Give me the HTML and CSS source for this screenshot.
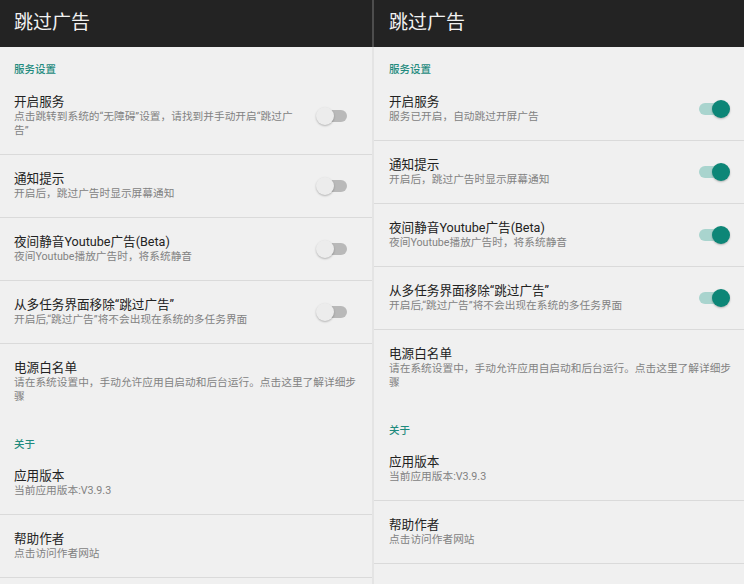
FILE: index.html
```html
<!DOCTYPE html>
<html lang="zh-CN">
<head>
<meta charset="utf-8">
<title>跳过广告</title>
<link rel="stylesheet" href="styles.css">
</head>
<body>
<div class="screens">
  <section class="phone phone-off">
    <header class="appbar"><h1>跳过广告</h1></header>
    <div class="cat">服务设置</div>
    <div class="pref">
      <div class="txt"><div class="t">开启服务</div><div class="s">点击跳转到系统的“无障碍”设置，请找到并手动开启“跳过广告”</div></div>
      <span class="sw"></span>
    </div>
    <div class="pref">
      <div class="txt"><div class="t">通知提示</div><div class="s">开启后，跳过广告时显示屏幕通知</div></div>
      <span class="sw"></span>
    </div>
    <div class="pref">
      <div class="txt"><div class="t">夜间静音Youtube广告(Beta)</div><div class="s">夜间Youtube播放广告时，将系统静音</div></div>
      <span class="sw"></span>
    </div>
    <div class="pref">
      <div class="txt"><div class="t">从多任务界面移除“跳过广告”</div><div class="s">开启后,“跳过广告”将不会出现在系统的多任务界面</div></div>
      <span class="sw"></span>
    </div>
    <div class="pref plain last">
      <div class="txt"><div class="t">电源白名单</div><div class="s">请在系统设置中，手动允许应用自启动和后台运行。点击这里了解详细步骤</div></div>
    </div>
    <div class="cat cat2">关于</div>
    <div class="pref plain">
      <div class="txt"><div class="t">应用版本</div><div class="s">当前应用版本:V3.9.3</div></div>
    </div>
    <div class="pref plain">
      <div class="txt"><div class="t">帮助作者</div><div class="s">点击访问作者网站</div></div>
    </div>
  </section>
  <div class="split"></div>
  <section class="phone phone-on">
    <header class="appbar"><h1>跳过广告</h1></header>
    <div class="cat">服务设置</div>
    <div class="pref">
      <div class="txt"><div class="t">开启服务</div><div class="s">服务已开启，自动跳过开屏广告</div></div>
      <span class="sw on"></span>
    </div>
    <div class="pref">
      <div class="txt"><div class="t">通知提示</div><div class="s">开启后，跳过广告时显示屏幕通知</div></div>
      <span class="sw on"></span>
    </div>
    <div class="pref">
      <div class="txt"><div class="t">夜间静音Youtube广告(Beta)</div><div class="s">夜间Youtube播放广告时，将系统静音</div></div>
      <span class="sw on"></span>
    </div>
    <div class="pref">
      <div class="txt"><div class="t">从多任务界面移除“跳过广告”</div><div class="s">开启后,“跳过广告”将不会出现在系统的多任务界面</div></div>
      <span class="sw on"></span>
    </div>
    <div class="pref plain last">
      <div class="txt"><div class="t">电源白名单</div><div class="s">请在系统设置中，手动允许应用自启动和后台运行。点击这里了解详细步骤</div></div>
    </div>
    <div class="cat cat2">关于</div>
    <div class="pref plain">
      <div class="txt"><div class="t">应用版本</div><div class="s">当前应用版本:V3.9.3</div></div>
    </div>
    <div class="pref plain">
      <div class="txt"><div class="t">帮助作者</div><div class="s">点击访问作者网站</div></div>
    </div>
  </section>
</div>
</body>
</html>
```
FILE: styles.css
```css
html, body {
  margin: 0;
  padding: 0;
  background: #f0f0f0;
}
body {
  font-family: Roboto, "Noto Sans CJK SC", sans-serif;
  width: 744px;
  height: 584px;
  overflow: hidden;
}
.screens {
  display: flex;
  height: 584px;
}
.phone {
  background: #f0f0f0;
  overflow: hidden;
}
.phone-off { width: 372px; }
.phone-on { width: 370px; }
.split {
  width: 2px;
  background: linear-gradient(#4d4d4d 0, #4d4d4d 47px, #e4e4e4 47px);
}
.appbar {
  height: 47px;
  background: #232323;
  display: flex;
  align-items: center;
  padding: 0 0 1px 14px;
  box-sizing: border-box;
}
.phone-on .appbar { padding-left: 15px; }
.appbar h1 {
  margin: 0;
  font-size: 19px;
  font-weight: 400;
  color: #f2f2f2;
  line-height: 24px;
}
.cat {
  padding: 16px 14px 1px;
  font-size: 10.5px;
  line-height: 14px;
  color: #1f8b7e;
  font-weight: 500;
}
.phone-on .cat { padding-left: 15px; }
.cat.cat2 { padding-top: 18px; padding-bottom: 0; }
.pref {
  display: flex;
  align-items: center;
  padding: 16px 25px 16px 14px;
  border-bottom: 1px solid #dadada;
}
.phone-on .pref { padding: 16px 14px 16px 15px; }
.pref.plain { padding-right: 8px; }
.phone-on .pref.plain { padding-right: 8px; }
.pref.last { border-bottom: 0; }
.txt {
  flex: 1;
  min-width: 0;
}
.t {
  font-size: 12.6px;
  line-height: 16px;
  color: #222;
}
.s {
  font-size: 10.7px;
  line-height: 14px;
  color: #828282;
}
.sw {
  position: relative;
  flex: none;
  width: 28px;
  height: 12px;
  border-radius: 6px;
  background: #b9b9b9;
  margin-left: 22px;
}
.sw::after {
  content: "";
  position: absolute;
  top: -3px;
  left: -3px;
  width: 18px;
  height: 18px;
  border-radius: 50%;
  background: #ececec;
  box-shadow: 0 1px 2px rgba(0,0,0,0.25);
}
.sw.on {
  background: #a9d4ce;
  margin-right: 3px;
}
.sw.on::after {
  left: 13px;
  background: #0d8677;
}
```
